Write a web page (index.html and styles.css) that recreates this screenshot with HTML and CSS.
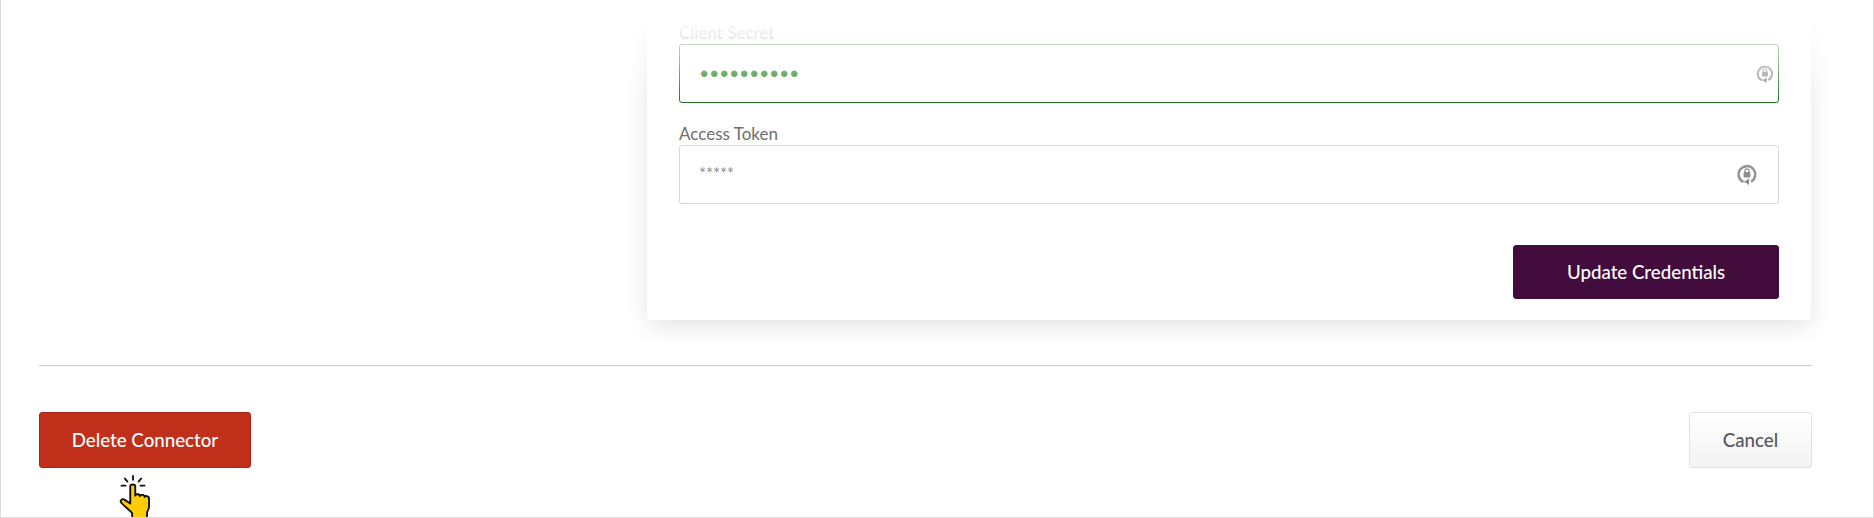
FILE: index.html
```html
<!DOCTYPE html>
<html lang="en">
<head>
<meta charset="utf-8">
<title>Edit Connector</title>
<link rel="stylesheet" href="styles.css">
</head>
<body>
<div class="frame">
  <div class="upper">
    <section class="card">
      <div class="field">
        <label class="label">Client Secret</label>
        <div class="input input-valid">
          <span class="dots">••••••••••</span>
          <svg class="lock lock-a" viewBox="0 0 20 22" aria-hidden="true"><use href="#lock-cycle"/></svg>
        </div>
      </div>
      <div class="field">
        <label class="label">Access Token</label>
        <div class="input">
          <span class="stars">*****</span>
          <svg class="lock lock-b" viewBox="0 0 20 22" aria-hidden="true"><use href="#lock-cycle"/></svg>
        </div>
      </div>
      <div class="card-actions">
        <button class="btn btn-primary">Update Credentials</button>
      </div>
    </section>
    <div class="top-fade"></div>
  </div>
  <hr class="divider">
  <div class="footer">
    <div class="delete-wrap">
      <button class="btn btn-danger">Delete Connector</button>
      <svg class="cursor" viewBox="0 0 30 36" aria-hidden="true">
        <g stroke="#111" stroke-width="1.5" stroke-linecap="round">
          <path d="M12 .8v3M5.500 2.800l2 2.500M18.500 2.800l-2 2.500M2.800 8.500h3.200M18 8.500h3.200"/>
        </g>
        <path d="M9.800 9c0-1.900 4-1.900 4 0v7.500c.2-1.600 3.800-1.500 3.800.4.200-1.500 3.700-1.300 3.700.7.400-1.300 3.500-1 3.500 1.100v6.300c0 2.400-1 3.400-1.500 4.600l-.2 5H11.500l-.3-4.200C9 27.800 5 25 2.600 22.200c-1.400-1.700.8-3.600 2.500-2.500l4.700 3.100z" fill="#ffcb05" stroke="#111" stroke-width="1.500" stroke-linejoin="round"/>
      </svg>
    </div>
    <button class="btn btn-cancel">Cancel</button>
  </div>
</div>
<svg class="defs" aria-hidden="true">
  <symbol id="lock-cycle" viewBox="0 0 20 22">
    <path d="M6.300 18.900A8.300 8.300 0 1 1 13.900 18.700" fill="none" stroke="#949494" stroke-width="2.500"/>
    <path d="M6.500 18.700h5v-2.800l-3 2.800 3 2.900v-2.900z" fill="#7c7c7c" stroke="#7c7c7c" stroke-width=".6"/>
    <rect x="6.600" y="9" width="6.800" height="5.600" rx="1" fill="#8e8e8e"/>
    <path d="M8 9.200V7.800a2 2 0 0 1 4 0v1.400" fill="none" stroke="#8e8e8e" stroke-width="1.300"/>
  </symbol>
</svg>
</body>
</html>
```
FILE: styles.css
```css
* { box-sizing: border-box; }
html, body { margin: 0; padding: 0; background: #fff; }
body { font-family: Lato, "Liberation Sans", sans-serif; }
.defs { display: none; }

.frame {
  height: 518px;
  border-left: 1px solid #dcdcdc;
  border-right: 1px solid #dcdcdc;
  border-bottom: 1px solid #dcdcdc;
  padding: 0 62px 0 38px;
  overflow: hidden;
}

.upper {
  position: relative;
  display: flex;
  justify-content: flex-end;
  height: 365px;
  padding-top: 10px;
}
.card {
  width: 1164px;
  height: 310px;
  padding: 10px 32px 0;
  background: #fff;
  border-radius: 4px;
  box-shadow: 0 6px 22px rgba(0, 0, 0, 0.11);
}
.top-fade {
  position: absolute;
  top: 0;
  left: 0;
  right: -30px;
  height: 104px;
  background: linear-gradient(to bottom,
    #fff 16%,
    rgba(255, 255, 255, 0.86) 33%,
    rgba(255, 255, 255, 0.72) 43%,
    rgba(255, 255, 255, 0) 100%);
  pointer-events: none;
}

.field { display: flex; flex-direction: column; }
.field + .field { margin-top: 18px; }
.label {
  height: 24px;
  font-size: 17px;
  line-height: 26px;
  color: #6e6e6e;
}
.input {
  position: relative;
  height: 59px;
  padding-left: 20px;
  border: 1px solid #d8d8d8;
  border-radius: 3px;
  background: #fff;
}
.input-valid { border-color: #1f6f1f; }
.dots {
  display: block;
  margin-top: 14px;
  font-family: "Liberation Sans", sans-serif;
  font-size: 24px;
  line-height: 30px;
  letter-spacing: 1.6px;
  color: #1a7f1a;
}
.stars {
  display: block;
  margin-top: 15px;
  margin-left: -1px;
  font-size: 16.500px;
  line-height: 26px;
  color: #8f8f8f;
}
.lock { position: absolute; }
.lock-a { top: 19px; right: 4px; width: 18px; height: 19px; }
.lock-b { top: 17px; right: 21px; width: 20px; height: 22px; }

.card-actions {
  display: flex;
  justify-content: flex-end;
  margin-top: 41px;
}

.btn {
  display: block;
  font-family: Lato, "Liberation Sans", sans-serif;
  font-size: 18.700px;
  font-weight: 500;
  border-radius: 3px;
  cursor: pointer;
}
.btn-primary {
  width: 266px;
  height: 54px;
  color: #fff;
  background: #420d3c;
  border: 1px solid #420d3c;
}
.btn-danger {
  width: 212px;
  height: 56px;
  color: #fff;
  background: #bf2f1a;
  border: 1px solid #a8291a;
}
.btn-cancel {
  width: 123px;
  height: 56px;
  margin-right: -1px;
  color: #55565e;
  background: linear-gradient(to bottom, #fff, #f3f3f3);
  border: 1px solid #e2e2e2;
}

.divider {
  height: 1px;
  margin: 0 -1px 0 0;
  border: 0;
  background: #c8c8c8;
}
.footer {
  display: flex;
  justify-content: space-between;
  align-items: flex-start;
  margin-top: 46px;
}
.delete-wrap { position: relative; }
.cursor {
  position: absolute;
  top: 63px;
  left: 79px;
  width: 37.500px;
  height: 45px;
}
```
